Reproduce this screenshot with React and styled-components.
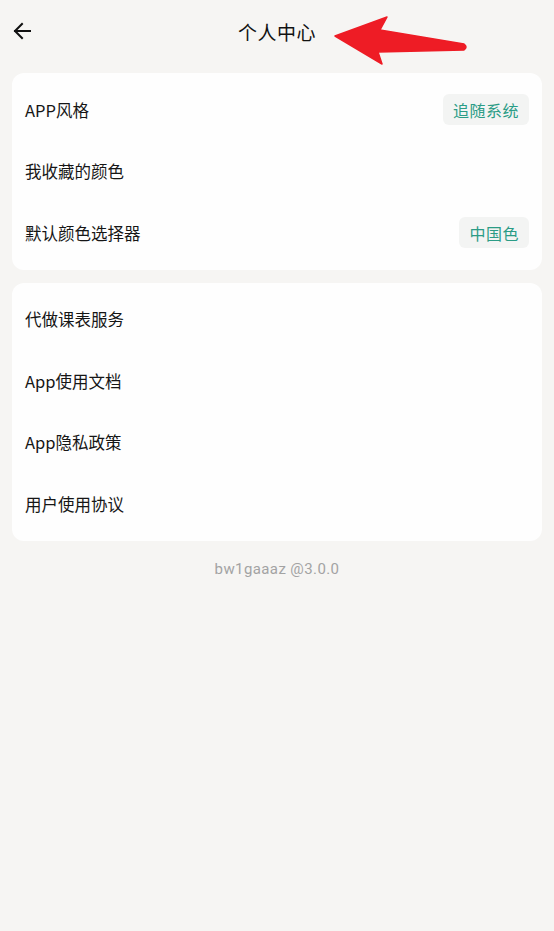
import React from "react";
import styled, { createGlobalStyle } from "styled-components";

const Global = createGlobalStyle`
  html, body { margin: 0; padding: 0; background: #f6f5f3; }
  body { font-family: "Noto Sans CJK SC", "Noto Sans", sans-serif; }
`;

const Page = styled.div`
  min-height: 931px;
  background: #f6f5f3;
  display: flex;
  flex-direction: column;
`;

const Header = styled.header`
  position: relative;
  height: 63px;
  display: flex;
  align-items: center;
  justify-content: center;
`;

const BackButton = styled.button`
  position: absolute;
  left: 8px;
  top: 17px;
  width: 28px;
  height: 28px;
  padding: 0;
  border: none;
  background: none;
  display: flex;
  align-items: center;
  justify-content: center;
  color: #111;
`;

const Title = styled.h1`
  margin: 0;
  font-size: 19px;
  font-weight: 400;
  color: #111;
  letter-spacing: 0.5px;
`;

const Annotation = styled.svg`
  position: absolute;
  left: 0;
  top: 0;
  pointer-events: none;
`;

const Content = styled.main`
  padding: 10px 12px 0;
  display: flex;
  flex-direction: column;
  gap: 13px;
`;

const Card = styled.section`
  background: #fefefe;
  border-radius: 12px;
  padding: 6px 13px;
  display: flex;
  flex-direction: column;
`;

const Row = styled.div`
  height: 61.5px;
  display: flex;
  align-items: center;
  justify-content: space-between;
`;

const Label = styled.span`
  font-size: 16.5px;
  color: #161616;
`;

const Tag = styled.span`
  background: #f3f4f3;
  color: #2b9c86;
  font-size: 16px;
  border-radius: 6px;
  height: 31px;
  padding: 0 10px;
  display: flex;
  align-items: center;
  letter-spacing: 0.5px;
`;

const Version = styled.div`
  margin-top: 6px;
  text-align: center;
  font-family: Roboto, "Noto Sans", sans-serif;
  font-size: 15px;
  color: #a3a3a3;
  letter-spacing: 0.4px;
`;

const BackArrow = () => (
  <svg width="20" height="20" viewBox="0 0 20 20" fill="none">
    <path d="M18 10H3M10 3L3 10l7 7" stroke="#111" strokeWidth="2" strokeLinecap="square" />
  </svg>
);

const settings = [
  { label: "APP风格", tag: "追随系统" },
  { label: "我收藏的颜色" },
  { label: "默认颜色选择器", tag: "中国色" },
];

const links = ["代做课表服务", "App使用文档", "App隐私政策", "用户使用协议"];

export default function App() {
  return (
    <Page>
      <Global />
      <Header>
        <BackButton aria-label="返回">
          <BackArrow />
        </BackButton>
        <Title>个人中心</Title>
        <Annotation width="554" height="70" viewBox="0 0 554 70">
          <path
            d="M335 36 L387 17 L380 30 L464 44 Q468 47 464 50 L378 52 L382 64 Z"
            fill="#ee1c25"
            stroke="#ee1c25"
            strokeWidth="1.5"
            strokeLinejoin="round"
          />
        </Annotation>
      </Header>
      <Content>
        <Card>
          {settings.map((s) => (
            <Row key={s.label}>
              <Label>{s.label}</Label>
              {s.tag && <Tag>{s.tag}</Tag>}
            </Row>
          ))}
        </Card>
        <Card>
          {links.map((l) => (
            <Row key={l}>
              <Label>{l}</Label>
            </Row>
          ))}
        </Card>
        <Version>bw1gaaaz @3.0.0</Version>
      </Content>
    </Page>
  );
}
